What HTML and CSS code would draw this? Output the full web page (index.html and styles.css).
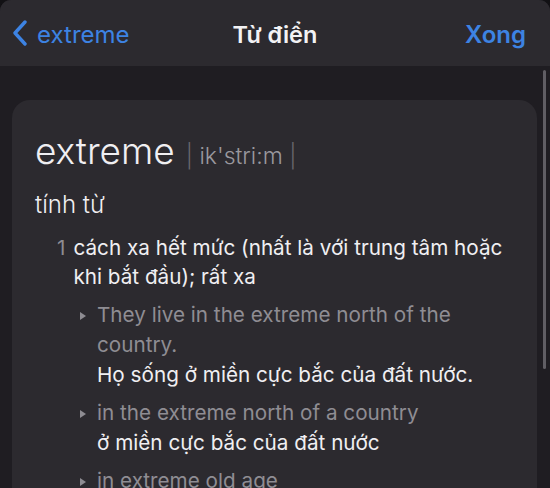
FILE: index.html
```html
<!DOCTYPE html>
<html lang="vi">
<head>
<meta charset="UTF-8">
<meta name="viewport" content="width=device-width, initial-scale=1.0">
<title>Từ điển</title>
<link rel="stylesheet" href="styles.css">
</head>
<body>

<div class="sheet">
  <!-- thanh điều hướng -->
  <div class="navbar">
    <a class="nav-back" href="#">
      <svg class="chevron" width="16" height="26" viewBox="0 0 16 26">
        <path d="M13 2 L3 13 L13 24" fill="none" stroke="currentColor" stroke-width="3.4" stroke-linecap="round" stroke-linejoin="round"/>
      </svg>
      <span>extreme</span>
    </a>
    <div class="nav-title">Từ điển</div>
    <a class="nav-done" href="#">Xong</a>
  </div>

  <!-- nội dung từ điển -->
  <div class="content">
    <div class="entry">
      <div class="headword">
        <span class="word">extreme</span>
        <span class="pron"><span class="bar">|</span> ik'stri:m <span class="bar">|</span></span>
      </div>
      <div class="pos">tính từ</div>

      <div class="sense">
        <span class="sense-num">1</span>
        <span class="sense-text">cách xa hết mức (nhất là với trung tâm hoặc khi bắt đầu); rất xa</span>
      </div>

      <ul class="examples">
        <li>
          <div class="ex-en">They live in the extreme north of the country.</div>
          <div class="ex-vi">Họ sống ở miền cực bắc của đất nước.</div>
        </li>
        <li>
          <div class="ex-en">in the extreme north of a country</div>
          <div class="ex-vi">ở miền cực bắc của đất nước</div>
        </li>
        <li>
          <div class="ex-en">in extreme old age</div>
          <div class="ex-vi">lúc tuổi già nhất</div>
        </li>
      </ul>
    </div>
    <div class="scrollbar"></div>
  </div>
</div>

</body>
</html>
```

FILE: styles.css
```css
body {
  margin: 0;
  background-color: #121114;
  font-family: 'Inter', 'Noto Sans', sans-serif;
  overflow: hidden;
}
.sheet {
  height: 488px;
  border-radius: 11px 11px 0 0;
  overflow: hidden;
  background-color: #1f1d22;
  display: flex;
  flex-direction: column;
}
.navbar {
  height: 66px;
  flex-shrink: 0;
  background-color: #2c2a2f;
  display: flex;
  align-items: center;
  justify-content: space-between;
  padding: 0 24px 0 12px;
  position: relative;
}
.navbar a {
  color: #3d83e3;
  text-decoration: none;
  font-size: 24px;
}
.nav-back {
  display: flex;
  align-items: center;
  gap: 9px;
  margin-top: 2px;
}
.chevron {
  display: block;
  margin-top: -2px;
}
.nav-title {
  position: absolute;
  left: 0;
  right: 0;
  text-align: center;
  color: #f2f2f4;
  font-size: 23.5px;
  font-weight: 600;
  pointer-events: none;
  margin-top: 2px;
}
.nav-done {
  font-weight: 600;
  margin-top: 2px;
}
.content {
  flex: 1;
  position: relative;
  padding: 34px 13px 0 12px;
}
.entry {
  background-color: #2c2a2f;
  border-radius: 18px;
  height: 100%;
  padding: 28px 12px 0 23px;
  box-sizing: border-box;
  color: #f0eff2;
}
.headword {
  display: flex;
  align-items: baseline;
  gap: 11px;
}
.word {
  font-size: 37px;
  font-weight: 300;
}
.pron {
  font-size: 23px;
  font-weight: 300;
  color: #9a989e;
}
.bar {
  color: #68666c;
}
.pos {
  font-size: 24px;
  font-weight: 300;
  margin-top: 17px;
}
.sense {
  display: flex;
  gap: 8px;
  margin: 14px 0 0 22px;
  font-size: 20.7px;
  line-height: 29px;
}
.sense-num {
  color: #8e8c92;
}
.examples {
  list-style: none;
  margin: 9px 0 0 45px;
  padding: 0 0 0 17px;
  font-size: 20.7px;
  line-height: 30px;
}
.examples li {
  position: relative;
  margin-bottom: 8px;
}
.examples li::before {
  content: "";
  position: absolute;
  left: -17px;
  top: 12px;
  border-left: 6px solid #8e8c92;
  border-top: 4px solid transparent;
  border-bottom: 4px solid transparent;
}
.ex-en {
  color: #8f8d93;
}
.ex-vi {
  color: #f0eff2;
}
.scrollbar {
  position: absolute;
  right: 4px;
  top: 4px;
  width: 3px;
  height: 299px;
  border-radius: 2px;
  background-color: #605e64;
}
```
